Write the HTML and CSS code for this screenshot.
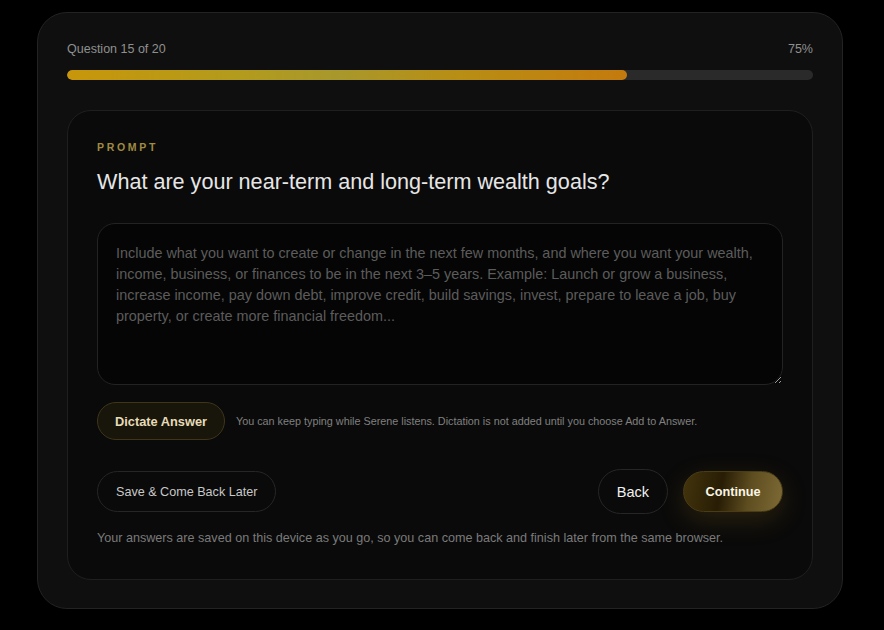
FILE: index.html
```html
<!DOCTYPE html>
<html lang="en">
<head>
<meta charset="utf-8">
<title>Question 15 of 20</title>
<link rel="stylesheet" href="styles.css">
</head>
<body>
<main class="shell">
  <div class="progress-head">
    <span>Question 15 of 20</span>
    <span>75%</span>
  </div>
  <div class="track"><div class="fill" style="width:75%"></div></div>
  <section class="card">
    <div class="eyebrow">PROMPT</div>
    <h1 class="question">What are your near-term and long-term wealth goals?</h1>
    <textarea class="answer" placeholder="Include what you want to create or change in the next few months, and where you want your wealth, income, business, or finances to be in the next 3–5 years. Example: Launch or grow a business, increase income, pay down debt, improve credit, build savings, invest, prepare to leave a job, buy property, or create more financial freedom..."></textarea>
    <div class="dictate-row">
      <button class="btn dictate">Dictate Answer</button>
      <span class="hint">You can keep typing while Serene listens. Dictation is not added until you choose Add to Answer.</span>
    </div>
    <div class="actions">
      <button class="btn ghost">Save &amp; Come Back Later</button>
      <div class="nav">
        <button class="btn ghost back">Back</button>
        <button class="btn primary">Continue</button>
      </div>
    </div>
    <p class="note">Your answers are saved on this device as you go, so you can come back and finish later from the same browser.</p>
  </section>
</main>
</body>
</html>
```
FILE: styles.css
```css
* { box-sizing: border-box; }
html, body { margin: 0; padding: 0; background: #000; }
body {
  font-family: "Liberation Sans", Arial, sans-serif;
  color: #ddd;
  padding: 12px 0 0 37px;
}
.shell {
  width: 806px;
  height: 597px;
  background: #0f0f0f;
  border: 1px solid #232323;
  border-radius: 30px;
  padding: 28px 29px;
}
.progress-head {
  display: flex;
  justify-content: space-between;
  font-size: 12.5px;
  color: #8f8f8f;
  line-height: 16px;
  height: 16px;
}
.track {
  margin-top: 13px;
  height: 10px;
  border-radius: 5px;
  background: #2a2a2a;
  overflow: hidden;
}
.fill {
  height: 100%;
  border-radius: 5px;
  background: linear-gradient(90deg, #c8960a 0%, #b39b1c 30%, #a8982c 48%, #b88e14 70%, #c47a0e 100%);
}
.card {
  margin-top: 30px;
  background: #0a0a0a;
  border: 1px solid #1f1f1f;
  border-radius: 24px;
  padding: 29px 29px 0;
  height: 470px;
}
.eyebrow {
  font-size: 10.5px;
  font-weight: 700;
  letter-spacing: 2.7px;
  color: #a08a42;
  line-height: 14px;
}
.question {
  margin: 15px 0 0;
  font-size: 21.6px;
  font-weight: 400;
  color: #e6e6e6;
  line-height: 26px;
}
.answer {
  display: block;
  margin-top: 28px;
  width: 100%;
  height: 162px;
  background: #050505;
  border: 1px solid #232323;
  border-radius: 18px;
  padding: 19px 18px;
  font-family: "Liberation Sans", Arial, sans-serif;
  font-size: 14.4px;
  line-height: 21px;
  color: #ccc;
  resize: vertical;
  outline: none;
}
.answer::placeholder { color: #5c5c5c; }
.btn {
  font-family: "Liberation Sans", Arial, sans-serif;
  border-radius: 999px;
  cursor: pointer;
}
.dictate-row {
  display: flex;
  align-items: center;
  gap: 11px;
  margin-top: 17px;
}
.dictate {
  height: 38px;
  padding: 0 17px;
  background: #18150b;
  border: 1px solid #3f3519;
  color: #e6dcb8;
  font-size: 12.8px;
  font-weight: 700;
}
.hint {
  font-size: 10.8px;
  color: #808080;
}
.actions {
  display: flex;
  justify-content: space-between;
  align-items: center;
  margin-top: 29px;
}
.ghost {
  height: 41px;
  padding: 0 18px;
  background: #0a0a0a;
  border: 1px solid #262626;
  color: #c8c8c8;
  font-size: 12.6px;
}
.nav {
  display: flex;
  align-items: center;
  gap: 15px;
}
.back {
  height: 45px;
  padding: 0 18px;
  color: #f0f0f0;
  font-size: 14.5px;
}
.primary {
  height: 41px;
  width: 100px;
  padding: 0;
  border: 1px solid #4a3c15;
  background: linear-gradient(100deg, #43340c 0%, #281d05 38%, #5e4d20 66%, #7d6a35 100%);
  color: #fbf6e6;
  font-size: 12.7px;
  font-weight: 700;
  box-shadow: 0 8px 26px rgba(160, 120, 30, 0.22);
}
.note {
  margin: 16px 0 0;
  font-size: 12.6px;
  color: #7a7a7a;
  line-height: 16px;
}
```
